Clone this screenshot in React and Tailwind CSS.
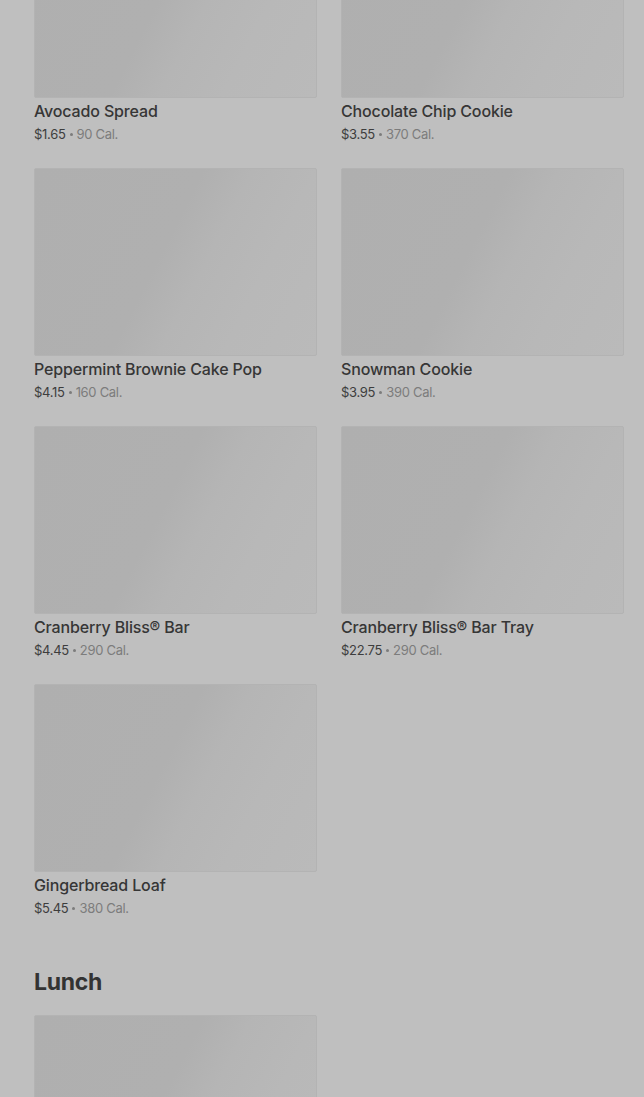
const items = [
  { name: "Avocado Spread", price: "$1.65", cal: "90 Cal." },
  { name: "Chocolate Chip Cookie", price: "$3.55", cal: "370 Cal." },
  { name: "Peppermint Brownie Cake Pop", price: "$4.15", cal: "160 Cal." },
  { name: "Snowman Cookie", price: "$3.95", cal: "390 Cal." },
  { name: "Cranberry Bliss® Bar", price: "$4.45", cal: "290 Cal." },
  { name: "Cranberry Bliss® Bar Tray", price: "$22.75", cal: "290 Cal." },
  { name: "Gingerbread Loaf", price: "$5.45", cal: "380 Cal." },
];

const Skeleton = () => (
  <div className="h-[188px] w-full rounded-[2px] border border-[#b3b3b3] bg-[linear-gradient(117deg,#afafaf_0%,#b0b0b0_45%,#b5b5b5_58%,#b8b8b8_75%,#bababa_100%)]" />
);

const Card = ({ item }) => (
  <div className="flex flex-col">
    <Skeleton />
    <div className="mt-[3px] h-[20px] text-[16px] leading-[20px] font-medium text-[#363636] tracking-[-0.15px]">
      {item.name}
    </div>
    <div className="mt-[4px] flex h-[18px] items-center text-[13px] leading-[18px] text-[#3d3d3d] tracking-[-0.3px]">
      <span>{item.price}</span>
      <span className="mx-[4px] h-[3px] w-[3px] rounded-full bg-[#7c7c7c]" />
      <span className="text-[#7c7c7c]">{item.cal}</span>
    </div>
  </div>
);

export default function App() {
  return (
    <div className="h-[1097px] w-[644px] overflow-hidden bg-[#bfbfbf] font-['Inter',sans-serif]">
      <div className="-mt-[90px] pl-[34px] pr-[20px]">
        <div className="grid grid-cols-2 gap-x-6 gap-y-[25px]">
          {items.map((item) => (
            <Card key={item.name} item={item} />
          ))}
        </div>
        <h2 className="mt-[49px] text-[23px] leading-[32px] font-bold text-[#333333] tracking-[-0.3px]">
          Lunch
        </h2>
        <div className="mt-[17px] grid grid-cols-2 gap-x-6">
          <Skeleton />
        </div>
      </div>
    </div>
  );
}
